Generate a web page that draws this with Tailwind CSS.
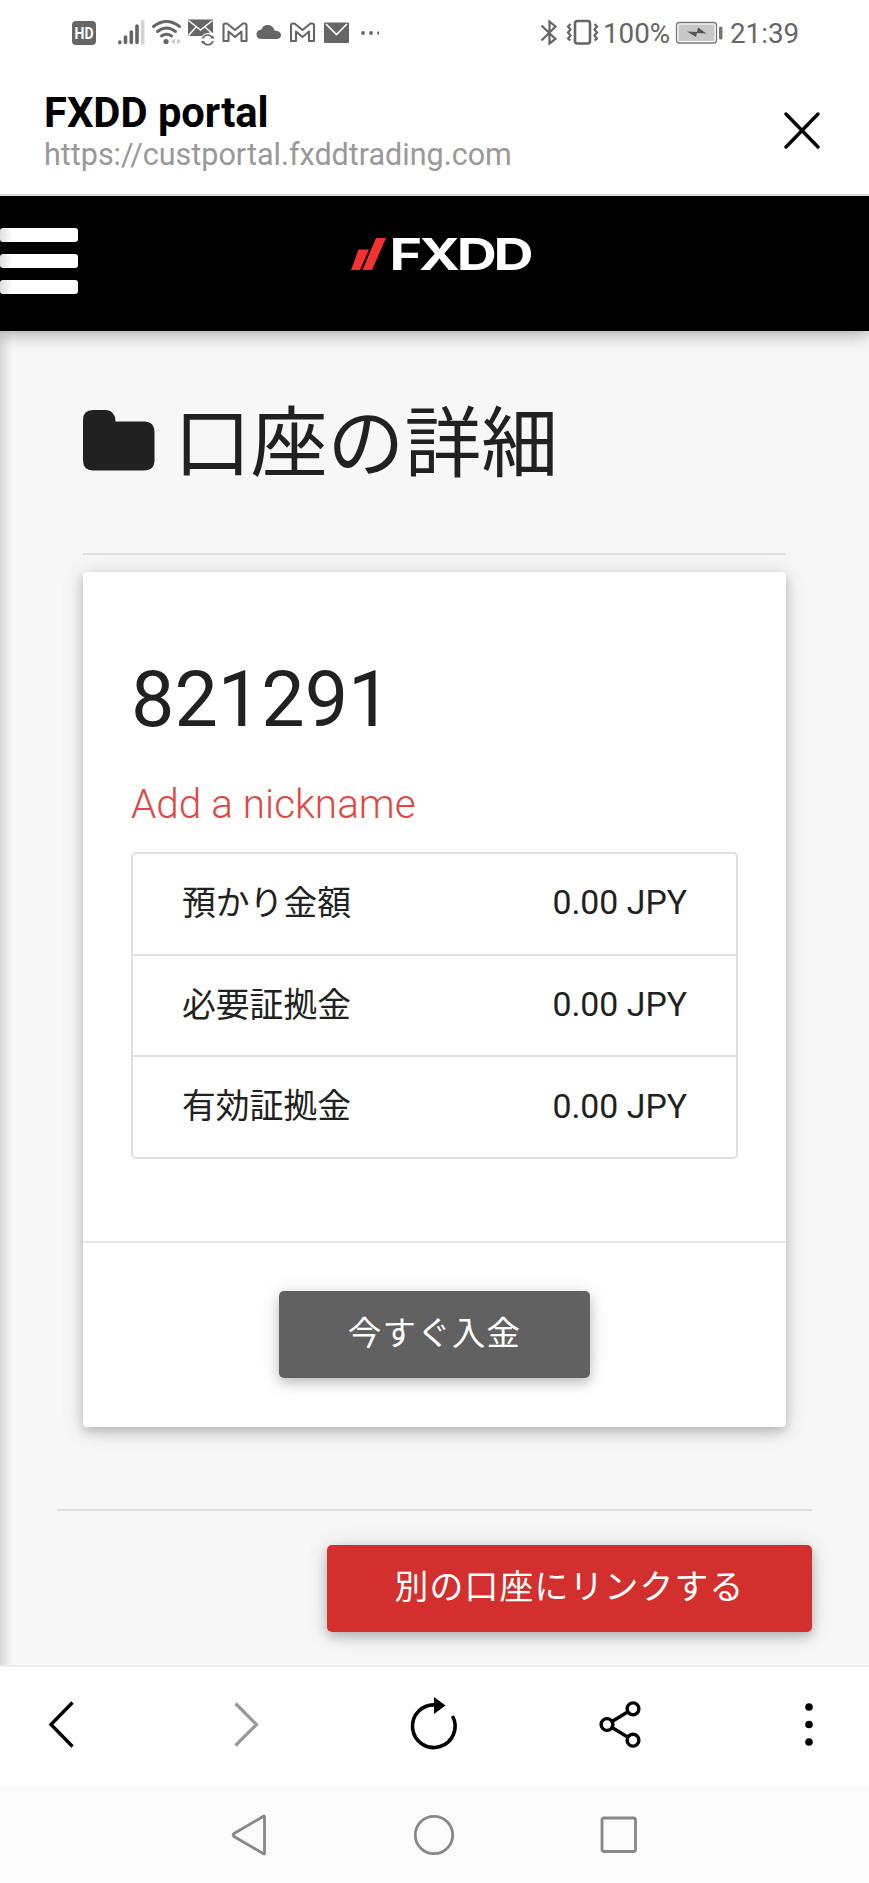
<!DOCTYPE html>
<html lang="ja">
<head>
<meta charset="utf-8">
<title>FXDD portal</title>
<script src="https://cdn.jsdelivr.net/npm/@tailwindcss/browser@4"></script>
</head>
<body class="flex h-[1883px] w-[869px] flex-col overflow-hidden bg-white font-['Roboto','Noto_Sans_CJK_JP',sans-serif] text-[#212121]">

<!-- Status bar -->
<div class="flex h-[66px] shrink-0 items-center justify-between pl-[72px] pr-[72px] text-[#666]">
  <svg class="h-[66px] w-[308px]" viewBox="72 0 308 66" fill="none" stroke="#666">
    <rect x="72" y="21" width="24" height="24" rx="4" fill="#666" stroke="none"/>
    <text x="84" y="38.500" text-anchor="middle" textLength="19" lengthAdjust="spacingAndGlyphs" font-family="Roboto" font-weight="700" font-size="16" fill="#fff" stroke="none">HD</text>
    <g stroke-width="3.600" stroke-linecap="round">
      <path d="M119.800 42v.6M125.500 37v5.500M131.300 32v10.500M137 26v16.500"/>
      <path stroke="#d4d4d4" stroke-linecap="butt" d="M142.700 20v24.500"/>
    </g>
    <g stroke-width="3" stroke-linecap="round">
      <path d="M153.500 26.500Q166.500 16.500 179.500 26.500M157.500 31.500Q166.500 24.500 175.500 31.500M161.500 36Q166.500 32.500 171.500 36"/>
    </g>
    <circle cx="166" cy="41.500" r="2.600" fill="#666" stroke="none"/>
    <path d="M175 38.500v6l-4-3zM177 38.500v6l4-3z" fill="#ccc" stroke="none"/>
    <path d="M188 19.500h25V33q-8-1-11 3h-14z" fill="#666" stroke="none"/>
    <path d="M188.500 20.500l12 9.500 12-9.500M188.500 35.500l8-9M212.500 34l-8-7.500" stroke="#fff" stroke-width="1.500"/>
    <path d="M202.700 38.500a5.300 5.300 0 0 1 9.800-.5M213 41a5.300 5.300 0 0 1-9.800.8" stroke-width="1.600"/>
    <path d="M210.500 38.500h4l-1.500-3zM201 41h4l-2.500 3z" fill="#666" stroke="none"/>
    <path id="mail-m" stroke-width="2.100" stroke-linejoin="round" d="M223.500 41V25.500q0-2 2-2h1.500l8 6.500 8-6.500h1.500q2 0 2 2V41h-5V31.500l-6.500 5.500-6.500-5.500V41z"/>
    <path fill="#666" stroke="none" d="M262 39q-5.500 0-5.500-4.500 0-4.500 5-5 1.500-4.500 6-4.500 5.500 0 7 5.500 6.500.5 6.500 4.500t-4.500 4z"/>
    <use href="#mail-m" x="67.500"/>
    <rect x="324" y="22.500" width="25" height="20.500" rx="1" fill="#666" stroke="none"/>
    <path d="M326 24l10.500 10.500L347 24" stroke="#fff" stroke-width="1.700"/>
    <g fill="#666" stroke="none"><circle cx="363" cy="33" r="1.900"/><circle cx="371" cy="33" r="1.900"/><path d="M379 31.200q-2 0-2 1.800t2 1.800z"/></g>
  </svg>
  <div class="flex items-center">
    <svg class="h-[66px] w-[62px]" viewBox="540 0 62 66" fill="none" stroke="#666">
      <path stroke-width="2.200" d="M541.500 25.500l14 13.500-6 4.500v-22l6 5-14 14"/>
      <rect x="575" y="21" width="15" height="22.500" rx="2.500" stroke-width="2.600"/>
      <path stroke-width="2.200" d="M570.500 24l-2.500 2.500 2.500 3-2.500 3 2.500 3-2.500 3 2.500 2M594.500 24l2.500 2.500-2.500 3 2.500 3-2.500 3 2.500 3-2.500 2"/>
    </svg>
    <span class="block w-[73px] whitespace-nowrap pt-px pl-px text-[27.800px] leading-[66px]">100%</span>
    <svg class="h-[66px] w-[55px]" viewBox="675 0 55 66" fill="none">
      <rect x="676.500" y="22.500" width="40" height="20.500" rx="3" stroke="#777" stroke-width="1.300"/>
      <rect x="678.500" y="24.500" width="36" height="16.500" rx="1" fill="#c8c8c8"/>
      <path fill="#555" d="M687 31.500l10 .5 1-4.500 8.500 6-9.500-.5-1 4z"/>
      <rect x="719" y="26.500" width="3.500" height="13" rx="1.500" fill="#777"/>
    </svg>
    <span class="block w-[67px] whitespace-nowrap pt-px text-[27.800px] leading-[66px]">21:39</span>
  </div>
</div>

<!-- Browser title bar -->
<header class="relative z-10 flex h-[130px] shrink-0 items-center justify-between border-b-2 border-[#ddd] bg-white pl-11 pr-[48px]">
  <div class="mt-[3px] flex flex-col">
    <h1 class="text-[41.700px] font-bold leading-[46px] text-black">FXDD portal</h1>
    <p class="text-[30.500px] leading-[38px] text-[#999]">https://custportal.fxddtrading.com</p>
  </div>
  <svg class="h-[38px] w-[38px]" viewBox="0 0 38 38" stroke="#000" stroke-width="3.400" stroke-linecap="round"><path d="M3 3l32 33M35 3L3 36"/></svg>
</header>

<!-- Web page -->
<div class="relative flex h-[1471px] shrink-0 flex-col border-b-2 border-[#eee] bg-[#f7f7f7]">
  <nav class="flex h-[135px] shrink-0 items-center bg-black shadow-[0_3px_16px_rgba(0,0,0,0.35)]">
    <div class="-mt-[5px] flex w-[78px] flex-col gap-[12px]">
      <span class="h-[14px] rounded-[3px] bg-white"></span>
      <span class="h-[14px] rounded-[3px] bg-white"></span>
      <span class="h-[14px] rounded-[3px] bg-white"></span>
    </div>
    <svg class="-mt-[19px] ml-[272px] h-[60px] w-[190px]" viewBox="350 224 190 60">
      <path fill="#f2322f" d="M358.500 249.500h10.500l-9 20.500h-9zM376 238h10l-14 32h-9.500z"/>
      <text x="389.500" y="269.700" textLength="141" lengthAdjust="spacingAndGlyphs" letter-spacing="-2.500" font-family="Inter" font-weight="700" font-size="44" fill="#fff">FXDD</text>
    </svg>
  </nav>

  <main class="flex flex-col">
    <section class="mx-[83px] flex h-[224px] items-start border-b-2 border-[#e0e0e0] pt-[55px]">
      <svg class="mt-[24px] h-[61px] w-[72px] shrink-0" viewBox="0 0 72 61"><path fill="#212121" d="M10 0h13q9.500 1 9.500 11.500H61q10.500 0 10.500 11V50q0 10.500-10.500 10.500H10Q0 60.500 0 50V10Q0 0 10 0z"/></svg>
      <h2 class="ml-[19px] mt-[3px] whitespace-nowrap text-[76.800px] leading-[112px]">口座の詳細</h2>
    </section>

    <section class="mx-[83px] mt-[17px] flex h-[855px] flex-col rounded-[4px] bg-white shadow-[0_5px_12px_rgba(0,0,0,0.2),0_2px_24px_rgba(0,0,0,0.13)]">
      <div class="flex h-[671px] flex-col border-b-2 border-[#e8e8e8] px-12 pt-[82px]">
        <h3 class="text-[77.250px] leading-[92px]">821291</h3>
        <a class="mt-[33px] text-[40.500px] font-light leading-[50px] text-[#e5453f]">Add a nickname</a>
        <dl class="mt-[23px] flex h-[307px] flex-col divide-y-2 divide-[#e0e0e0] rounded-[5px] border-2 border-[#e0e0e0] text-[33.800px]">
          <div class="flex flex-1 items-center justify-between px-[49px]"><dt class="pt-px">預かり金額</dt><dd>0.00 JPY</dd></div>
          <div class="flex flex-1 items-center justify-between px-[49px]"><dt class="pt-px">必要証拠金</dt><dd>0.00 JPY</dd></div>
          <div class="flex flex-1 items-center justify-between px-[49px]"><dt class="pt-px">有効証拠金</dt><dd>0.00 JPY</dd></div>
        </dl>
      </div>
      <div class="flex justify-center pt-[48px]">
        <button class="h-[87px] w-[311px] rounded-[5px] bg-[#616161] pb-px text-[33.500px] tracking-[1.200px] text-white shadow-[0_5px_12px_rgba(0,0,0,0.2),0_2px_24px_rgba(0,0,0,0.1)]">今すぐ入金</button>
      </div>
    </section>

    <section class="mx-[57px] mt-[82px] flex justify-end border-t-2 border-[#e0e0e0] pt-[34px]">
      <button class="h-[87px] w-[485px] rounded-[5px] bg-[#d32f2f] text-[33.800px] tracking-[1.200px] text-white shadow-[0_5px_12px_rgba(0,0,0,0.22),0_2px_24px_rgba(0,0,0,0.12)]">別の口座にリンクする</button>
    </section>
  </main>
  <!-- Edge shadow of the closed side drawer -->
  <div class="absolute inset-y-0 left-0 w-3 bg-linear-to-r from-black/13 to-transparent"></div>
</div>

<!-- Browser toolbar -->
<div class="flex h-[120px] shrink-0 items-center bg-white pb-[5px] pl-[46px]">
  <svg class="h-[60px] w-[30px]" viewBox="46 1695 30 60" fill="none" stroke="#000" stroke-width="3.400"><path d="M72.500 1702.500L51 1724.500l21.500 22"/></svg>
  <svg class="ml-[156px] h-[60px] w-[30px]" viewBox="232 1695 30 60" fill="none" stroke="#999" stroke-width="3.200"><path d="M235.500 1703.500L256.500 1724.500l-21 21"/></svg>
  <svg class="ml-[146px] h-[60px] w-[52px]" viewBox="408 1695 52 60" fill="none" stroke="#000" stroke-width="3.600"><path d="M436 1705a21.300 21.300 0 1 0 16.500 11"/><path d="M434 1697l11.500 8.500-11.500 8.500z" fill="#000" stroke="none"/></svg>
  <svg class="ml-[137px] h-[60px] w-[46px]" viewBox="597 1695 46 60" fill="none" stroke="#000" stroke-width="3.400"><circle cx="633" cy="1708.800" r="5.900"/><circle cx="607" cy="1724.500" r="5.900"/><circle cx="633" cy="1740.200" r="5.900"/><path d="M612 1721.500l16-9.700M612 1727.500l16 9.700"/></svg>
  <svg class="ml-[160px] h-[60px] w-[12px]" viewBox="803 1695 12 60"><circle cx="809" cy="1707" r="3.800"/><circle cx="809" cy="1724.500" r="3.800"/><circle cx="809" cy="1742" r="3.800"/></svg>
</div>

<!-- System navigation -->
<div class="flex h-[96px] shrink-0 items-center bg-[#fbfbfb] pl-[228px]">
  <svg class="h-[42px] w-[40px]" viewBox="228 1813.500 40 42" fill="none" stroke="#888" stroke-width="2.800" stroke-linejoin="round"><path d="M264.500 1816v37q0 .8-1 .3L234 1836q-1.500-1.500 0-3l29.500-17.300q1-.5 1 .3z"/></svg>
  <svg class="ml-[145px] h-[42px] w-[42px]" viewBox="0 0 42 42" fill="none" stroke="#888" stroke-width="2.800"><circle cx="21" cy="21" r="18.700"/></svg>
  <svg class="ml-[144px] h-[42px] w-[40px]" viewBox="0 0 40 42" fill="none" stroke="#888" stroke-width="2.800"><rect x="3" y="4" width="33.500" height="33.500" rx="2"/></svg>
</div>
</body>
</html>
